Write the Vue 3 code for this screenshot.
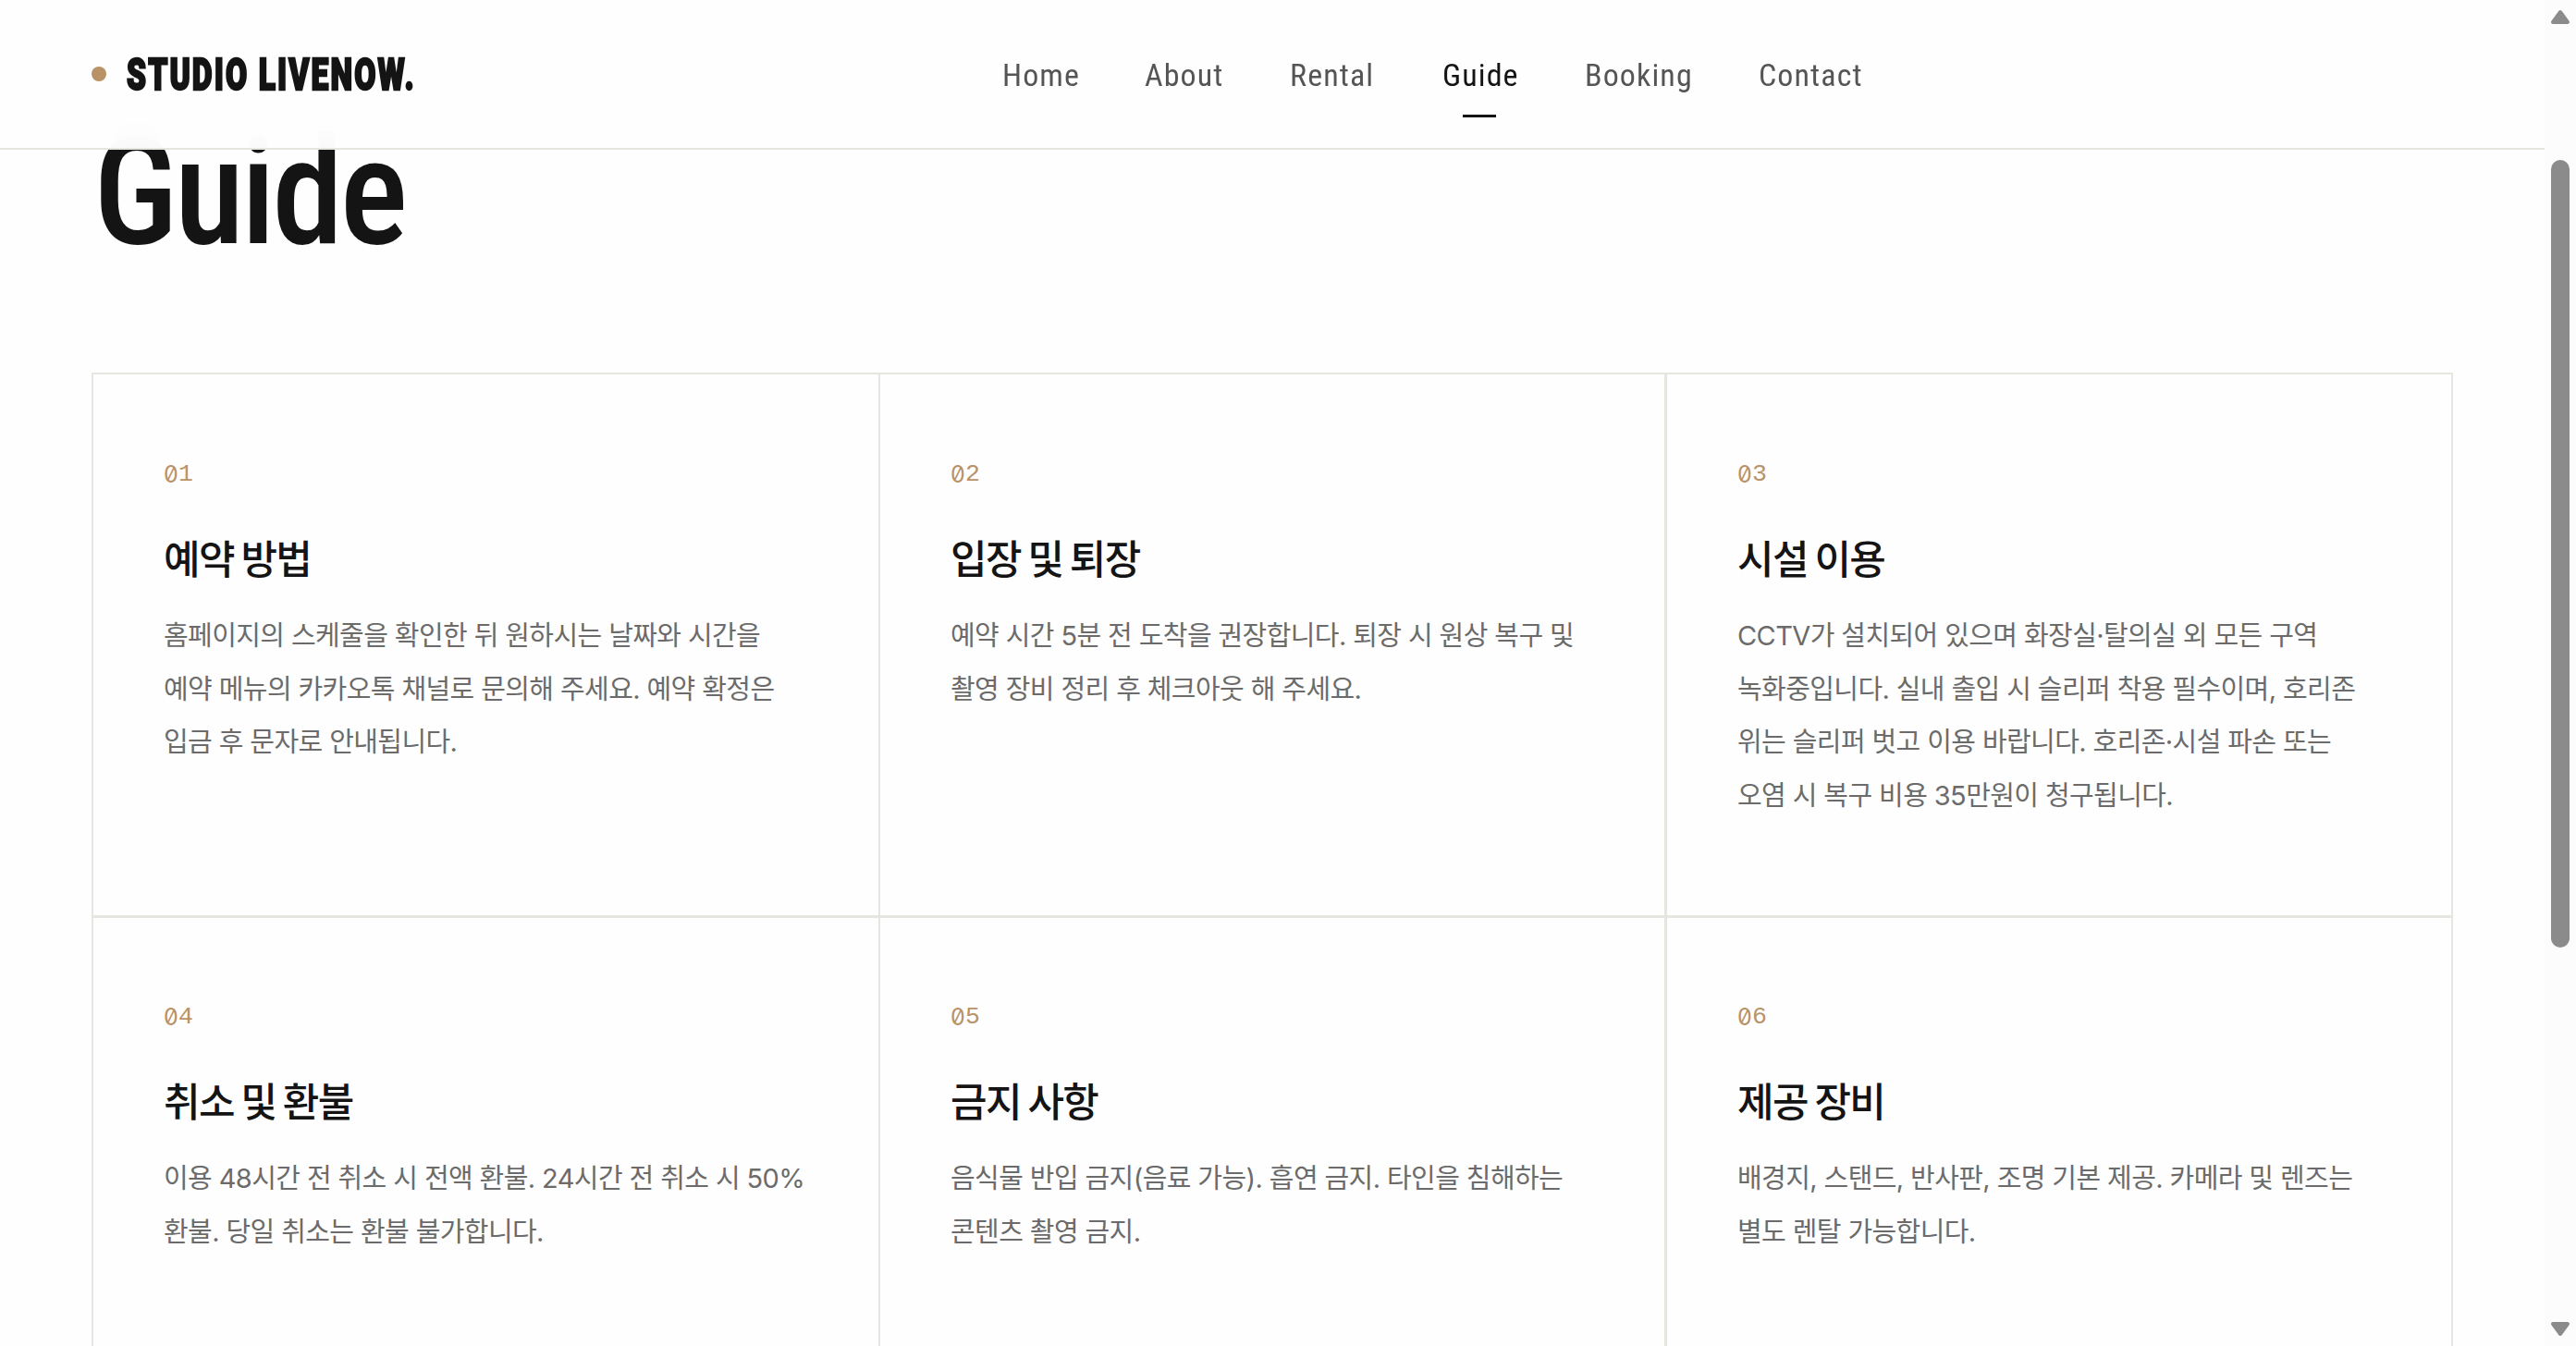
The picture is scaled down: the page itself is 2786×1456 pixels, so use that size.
<script setup>
const links = [
  { name: 'Home', width: 81 },
  { name: 'About', width: 84 },
  { name: 'Rental', width: 92 },
  { name: 'Guide', width: 81, active: true },
  { name: 'Booking', width: 115 },
  { name: 'Contact', width: 113 }
]

const guides = [
  { title: '예약 방법', lines: ['홈페이지의 스케줄을 확인한 뒤 원하시는 날짜와 시간을', '예약 메뉴의 카카오톡 채널로 문의해 주세요. 예약 확정은', '입금 후 문자로 안내됩니다.'] },
  { title: '입장 및 퇴장', lines: ['예약 시간 5분 전 도착을 권장합니다. 퇴장 시 원상 복구 및', '촬영 장비 정리 후 체크아웃 해 주세요.'] },
  { title: '시설 이용', lines: ['CCTV가 설치되어 있으며 화장실·탈의실 외 모든 구역', '녹화중입니다. 실내 출입 시 슬리퍼 착용 필수이며, 호리존', '위는 슬리퍼 벗고 이용 바랍니다. 호리존·시설 파손 또는', '오염 시 복구 비용 35만원이 청구됩니다.'] },
  { title: '취소 및 환불', lines: ['이용 48시간 전 취소 시 전액 환불. 24시간 전 취소 시 50%', '환불. 당일 취소는 환불 불가합니다.'] },
  { title: '금지 사항', lines: ['음식물 반입 금지(음료 가능). 흡연 금지. 타인을 침해하는', '콘텐츠 촬영 금지.'] },
  { title: '제공 장비', lines: ['배경지, 스탠드, 반사판, 조명 기본 제공. 카메라 및 렌즈는', '별도 렌탈 가능합니다.'] }
]
</script>

<template>
  <div class="page">
    <div class="view">
      <header class="header">
        <a class="logo"><i class="dot"></i><span class="logo-text">STUDIO LIVENOW.</span></a>
        <nav class="nav">
          <a v-for="link in links" :key="link.name" class="link" :class="{ active: link.active }" :style="{ width: link.width + 'px' }">
            <span>{{ link.name }}</span>
          </a>
        </nav>
      </header>
      <main class="content">
        <h1 class="heading"><span>Guide</span></h1>
        <section class="grid">
          <article v-for="(guide, i) in guides" :key="guide.title" class="card">
            <div class="num"><span class="zero">0</span>{{ i + 1 }}</div>
            <h3 class="title">{{ guide.title }}</h3>
            <p class="text">
              <span v-for="line in guide.lines" :key="line">{{ line }}</span>
            </p>
          </article>
        </section>
      </main>
    </div>
    <aside class="scrollbar">
      <svg width="22" height="17" viewBox="0 0 22 17"><path d="M11 3 L19 14 H3 Z" /></svg>
      <div class="thumb"></div>
      <svg class="down" width="22" height="17" viewBox="0 0 22 17"><path d="M11 14 L19 3 H3 Z" /></svg>
    </aside>
  </div>
</template>

<style>
body {
  background: #fefefe;
  overflow: hidden;
}
</style>

<style scoped>
.page {
  display: flex;
  height: 1456px;
  overflow: hidden;
  background: #fefefe;
  color: #141414;
  font-family: Inter, "Noto Sans CJK KR", sans-serif;
}

.view {
  width: 2752px;
  height: 1456px;
  overflow: hidden;
}

.header {
  position: relative;
  z-index: 2;
  box-sizing: border-box;
  display: flex;
  height: 162px;
  border-bottom: 2px solid #e6e6e0;
  background: rgba(254, 254, 254, 0.97);
  backdrop-filter: blur(22px);
  font-family: Roboto, sans-serif;
}

.logo {
  display: flex;
  align-items: center;
  width: 985px;
  padding-left: 99px;
}

.dot {
  width: 16px;
  height: 16px;
  border-radius: 50%;
  background: #b99268;
}

.logo-text {
  margin-left: 22px;
  padding-top: 1px;
  font-size: 48px;
  font-weight: 900;
  line-height: 50px;
  letter-spacing: 3px;
  white-space: nowrap;
  transform: scaleX(0.7);
  transform-origin: 0 50%;
  -webkit-text-stroke: 2.4px #141414;
}

.nav {
  display: flex;
  gap: 73px;
  padding-top: 34px;
}

.link {
  position: relative;
  height: 93px;
  color: #555;
  font-size: 34px;
  line-height: 94px;
}

.link span {
  display: inline-block;
  letter-spacing: 1.1px;
  font-stretch: 75%;
  font-weight: 450;
}

.active {
  color: #141414;
}

.active::after {
  content: "";
  position: absolute;
  bottom: 0;
  left: 22px;
  width: 36px;
  height: 3px;
  background: #141414;
}

.content {
  padding: 0 99px;
}

.heading {
  height: 241px;
  margin: 0;
  font-family: Roboto, sans-serif;
  font-size: 162px;
  font-weight: 500;
  line-height: 92px;
}

.heading span {
  display: inline-block;
  padding-left: 2px;
  font-stretch: 75%;
  letter-spacing: -4px;
  transform: scaleX(0.96);
  transform-origin: 0 50%;
}

.grid {
  display: grid;
  grid-template-columns: 849px 850px 851px;
  grid-template-rows: 585px 588px;
  border: 2px solid #e6e6e0;
}

.card {
  box-sizing: border-box;
  padding: 93px 76px 0;
}

.card:nth-child(3n + 2) {
  border-left: 2px solid #e6e6e0;
}

.card:nth-child(3n) {
  border-left: 3px solid #e6e6e0;
}

.card:nth-child(n + 4) {
  padding-top: 92px;
  border-top: 3px solid #e6e6e0;
}

.num {
  display: flex;
  height: 30px;
  color: #b99268;
  font-family: "Liberation Mono", monospace;
  font-size: 26.5px;
  line-height: 30px;
}

.zero {
  width: 16px;
  font-family: Inter, sans-serif;
  font-size: 25px;
  font-feature-settings: "zero";
}

.title {
  margin: 47px 0 0;
  font-size: 43px;
  font-weight: 500;
  line-height: 60px;
  letter-spacing: -1.6px;
  word-spacing: -2.4px;
}

.text {
  margin: 24px 0 0;
  color: #6b6b6b;
  font-size: 29px;
  line-height: 57.7px;
  letter-spacing: -0.6px;
}

.text span {
  display: block;
  white-space: nowrap;
}

.scrollbar {
  display: flex;
  flex-direction: column;
  align-items: center;
  width: 34px;
  height: 1456px;
  padding: 10px 0;
  box-sizing: border-box;
  background: #fcfcfc;
}

.scrollbar svg {
  fill: #8b8b8b;
  stroke: #8b8b8b;
  stroke-width: 4;
  stroke-linejoin: round;
}

.thumb {
  width: 20px;
  height: 852px;
  margin-top: 146px;
  border-radius: 10px;
  background: #8b8b8b;
}

.down {
  margin-top: auto;
}
</style>
